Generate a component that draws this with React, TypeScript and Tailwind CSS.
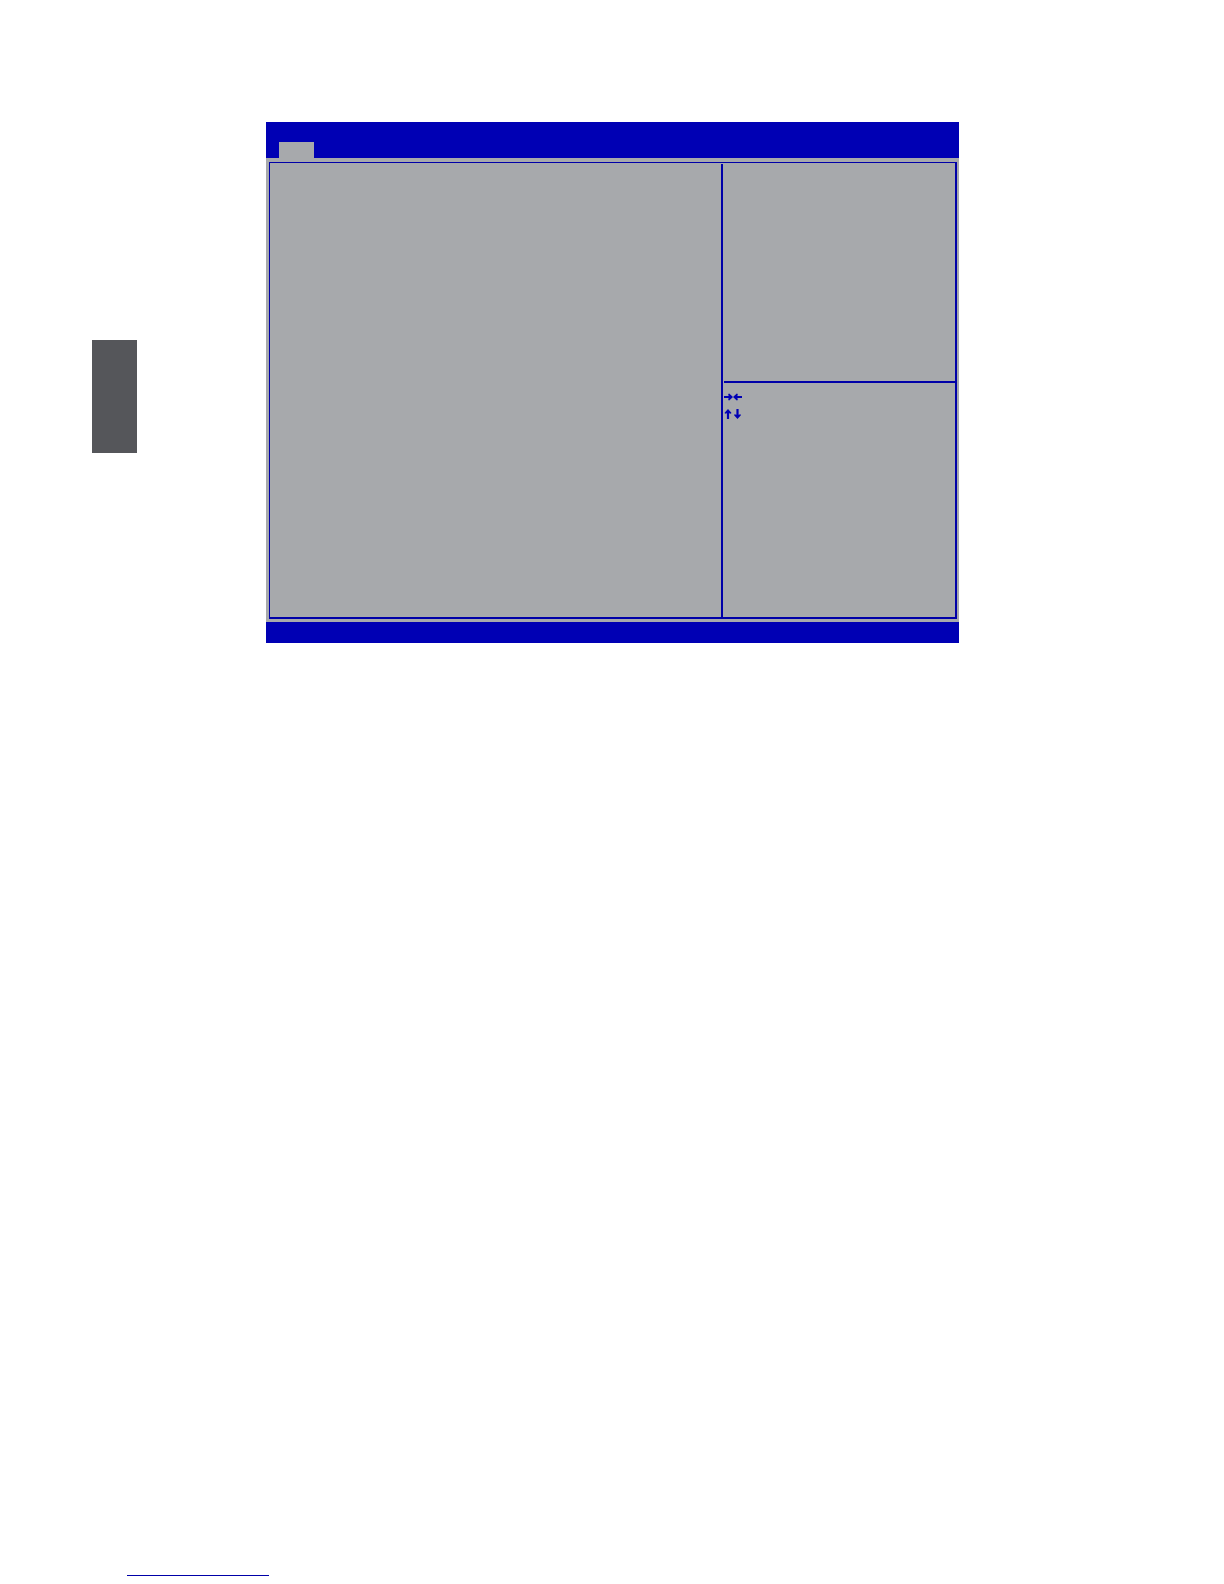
type KeyIconProps = {
  className?: string;
};

function LeftRightKeys({ className }: KeyIconProps) {
  return (
    <svg className={className} width="18" height="8" viewBox="0 0 18 8" aria-hidden="true">
      <path d="M0 2.9h4.6L4.2 1 5.2 0.6 9 4 5.2 7.4 4.2 7l0.4-1.9H0z" />
      <path d="M18 2.9h-4.6l0.4-1.9-1-0.4L9 4l3.8 3.4 1-0.4-0.4-1.9H18z" />
    </svg>
  );
}

function UpDownKeys({ className }: KeyIconProps) {
  return (
    <svg className={className} width="18" height="10" viewBox="0 0 18 10" aria-hidden="true">
      <path d="M2.9 10V4.2L1 4.8 0.6 3.8 4 0l3.4 3.8L7 4.8 5.1 4.2V10z" />
      <path d="M12.4 0v5.8l-1.9-0.6-0.4 1L13.5 10l3.4-3.8-0.4-1-1.9 0.6V0z" />
    </svg>
  );
}

function SetupScreen() {
  return (
    <section className="flex min-w-0 flex-1 flex-col bg-[#a7a9ac]">
      <header className="flex h-9 items-end bg-[#0000b4] px-[13px]">
        <button type="button" aria-label="Main" className="h-4 w-[35px] bg-[#a7a9ac]" />
      </header>

      <div className="pt-1 pr-[2px] pb-[3px] pl-[3px]">
        <div className="flex min-h-[457px] border-t border-r-2 border-b-2 border-l border-[#0000a8] pt-px">
          <div className="flex-1" />
          <div className="flex w-[234px] flex-col border-l-2 border-[#0000a8] pl-px">
            <div className="h-[217px]" />
            <div className="flex flex-1 flex-col gap-2 border-t-2 border-[#0000a8] pt-[10px]">
              <LeftRightKeys className="fill-[#0000b4]" />
              <UpDownKeys className="fill-[#0000b4]" />
            </div>
          </div>
        </div>
      </div>

      <footer className="h-[21px] bg-[#0000b4]" />
    </section>
  );
}

export default function App() {
  return (
    <main className="flex min-h-screen flex-col bg-white pt-[122px] pb-2 font-['Liberation_Sans',sans-serif]">
      <div className="flex items-start pr-[265px] pl-[92px]">
        <aside className="mt-[218px] mr-[129px] h-[113px] w-[45px] shrink-0 bg-[#55565a]" />
        <SetupScreen />
      </div>
      <a
        href="#top"
        aria-label="Back to top"
        className="mt-auto ml-[127px] h-4 w-[142px] border-b border-[#0000a8]"
      />
    </main>
  );
}
